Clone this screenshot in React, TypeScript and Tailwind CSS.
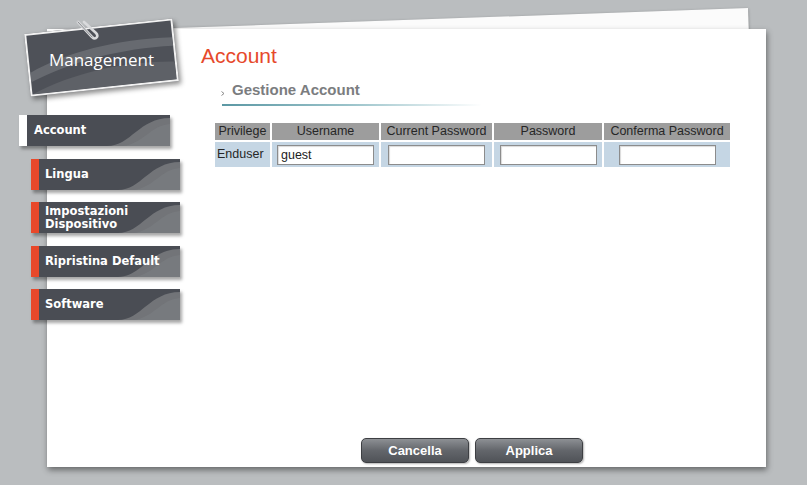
import React from 'react';

const MENU = [
  { label: 'Account', active: true },
  { label: 'Lingua' },
  { label: 'Impostazioni Dispositivo', twoLines: true },
  { label: 'Ripristina Default' },
  { label: 'Software' },
];

const COLUMNS = ['Privilege', 'Username', 'Current Password', 'Password', 'Conferma Password'];

function Swoosh() {
  return (
    <svg className="absolute inset-0 h-full w-full" viewBox="0 0 143 31" preserveAspectRatio="none">
      <path d="M80 31 C104 31 112 3 143 3 L143 31 Z" fill="#727478" />
      <path d="M96 31 C116 29 124 10 143 9 L143 31 Z" fill="#7c7e82" opacity="0.6" />
    </svg>
  );
}

function MenuItem({ label, active, twoLines }: { label: string; active?: boolean; twoLines?: boolean }) {
  return (
    <div
      className={`relative flex h-[31px] shadow-[2px_3px_3px_rgba(0,0,0,0.35)] ${
        active ? 'w-[151px]' : 'ml-[12px] w-[149px]'
      }`}
    >
      <div className={`w-[8px] shrink-0 ${active ? 'bg-white' : 'bg-[#e8482a]'}`} />
      <div className="relative flex-1 overflow-hidden bg-[#4a4d54]">
        <Swoosh />
        <span
          className={`relative flex h-full items-center font-['DejaVu_Sans',sans-serif] text-[11.5px] font-bold text-white ${
            active ? 'pl-[7px]' : 'pl-[6px]'
          } ${twoLines ? 'leading-[13px]' : 'leading-none'}`}
        >
          {twoLines ? (
            <span>
              Impostazioni
              <br />
              Dispositivo
            </span>
          ) : (
            label
          )}
        </span>
      </div>
    </div>
  );
}

function ManagementTag() {
  return (
    <div className="relative ml-[8px] mt-[-3px] flex h-[63px] w-[149px] items-center justify-center">
      <div className="absolute inset-0 -rotate-6 overflow-hidden border-2 border-[#f2f2f2] bg-[#4e5158] shadow-[2px_3px_5px_rgba(0,0,0,0.45)]">
        <svg className="absolute inset-0 h-full w-full" viewBox="0 0 149 63" preserveAspectRatio="none">
          <path d="M0 40 C40 22 90 14 149 18 L149 27 C95 24 45 32 0 50 Z" fill="#676a70" />
          <path d="M0 63 C45 44 100 38 149 44 L149 63 Z" fill="#5e6167" />
        </svg>
      </div>
      <svg className="absolute left-[48px] top-[-6px]" width="24" height="22" viewBox="0 0 24 22">
        <path d="M3 2 L17 17 Q20 20 22 17 Q23 15 21 13 L9 2" fill="none" stroke="#d9dadc" strokeWidth="2.6" strokeLinecap="round" />
        <path d="M3 2 L17 17" fill="none" stroke="#8d8f93" strokeWidth="1" strokeLinecap="round" />
      </svg>
      <span className="relative mt-[4px] font-['Open_Sans',sans-serif] text-[17px] leading-none text-white">
        Management
      </span>
    </div>
  );
}

export default function App() {
  return (
    <div className="relative h-[485px] w-[807px] overflow-hidden bg-[#babdbf] pl-[47px] pt-[29px] font-['Liberation_Sans',Arial,sans-serif]">
      {/* sheet behind the panel */}
      <div className="absolute left-[158px] top-[8px] h-[40px] w-[590px] origin-top-right -rotate-2 bg-[#fbfbfb] shadow-[0_1px_3px_rgba(0,0,0,0.35)]" />

      <div className="relative flex h-[438px] w-[719px] bg-white shadow-[1px_3px_6px_rgba(0,0,0,0.45)]">
        {/* left column */}
        <div className="ml-[-28px] flex w-[161px] shrink-0 flex-col">
          <ManagementTag />
          <div className="mt-[26px] flex flex-col">
            {MENU.map((m, i) => (
              <div key={m.label} className={i === 0 ? '' : i % 2 === 1 ? 'mt-[13px]' : 'mt-[12px]'}>
                <MenuItem label={m.label} active={m.active} twoLines={m.twoLines} />
              </div>
            ))}
          </div>
        </div>

        {/* content */}
        <div className="flex flex-1 flex-col">
          <h1 className="ml-[21px] mt-[13px] text-[21px] leading-[27px] text-[#e6492b]">Account</h1>

          <div className="ml-[41px] mt-[11px] flex h-[20px] items-center">
            <svg width="4" height="5" viewBox="0 0 4 5" className="mt-[6px]">
              <path d="M0.5 0.5 L3 2.5 L0.5 4.5" fill="none" stroke="#888" strokeWidth="1" />
            </svg>
            <span className="ml-[7px] text-[15px] font-bold text-[#7b7d7f]">Gestione Account</span>
          </div>
          <div className="ml-[42px] mt-[4px] h-[2px] w-[260px] bg-gradient-to-r from-[#5b98a4] via-[#9cc4cb] to-transparent" />

          {/* account table */}
          <div className="ml-[35px] mt-[17px] grid grid-cols-[55px_107px_111px_108px_126px] gap-[2px] text-[12.5px] text-[#262626]">
            {COLUMNS.map(c => (
              <div key={c} className="flex h-[17px] items-center justify-center bg-[#9d9d9d] leading-none">
                {c}
              </div>
            ))}
            <div className="flex h-[25px] items-center bg-[#c5d6e4] pl-[2px]">Enduser</div>
            {['guest', '', '', ''].map((v, i) => (
              <div key={i} className="flex h-[25px] items-center justify-center bg-[#c5d6e4]">
                <input
                  type={i === 0 ? 'text' : 'password'}
                  defaultValue={v}
                  className="h-[20px] w-[97px] border border-[#8c8c8c] bg-white px-[3px] text-[12.5px] text-[#222] shadow-[inset_1px_1px_1px_rgba(0,0,0,0.15)] outline-none"
                />
              </div>
            ))}
          </div>

          <div className="mb-[4px] ml-[181px] mt-auto flex gap-[6px]">
            {['Cancella', 'Applica'].map(b => (
              <button
                key={b}
                className="h-[25px] w-[108px] rounded-[5px] border border-[#3d3f43] bg-gradient-to-b from-[#8d9094] via-[#63666b] to-[#505358] text-[13px] font-bold text-white shadow-[1px_1px_2px_rgba(0,0,0,0.3)]"
              >
                {b}
              </button>
            ))}
          </div>
        </div>
      </div>
    </div>
  );
}
